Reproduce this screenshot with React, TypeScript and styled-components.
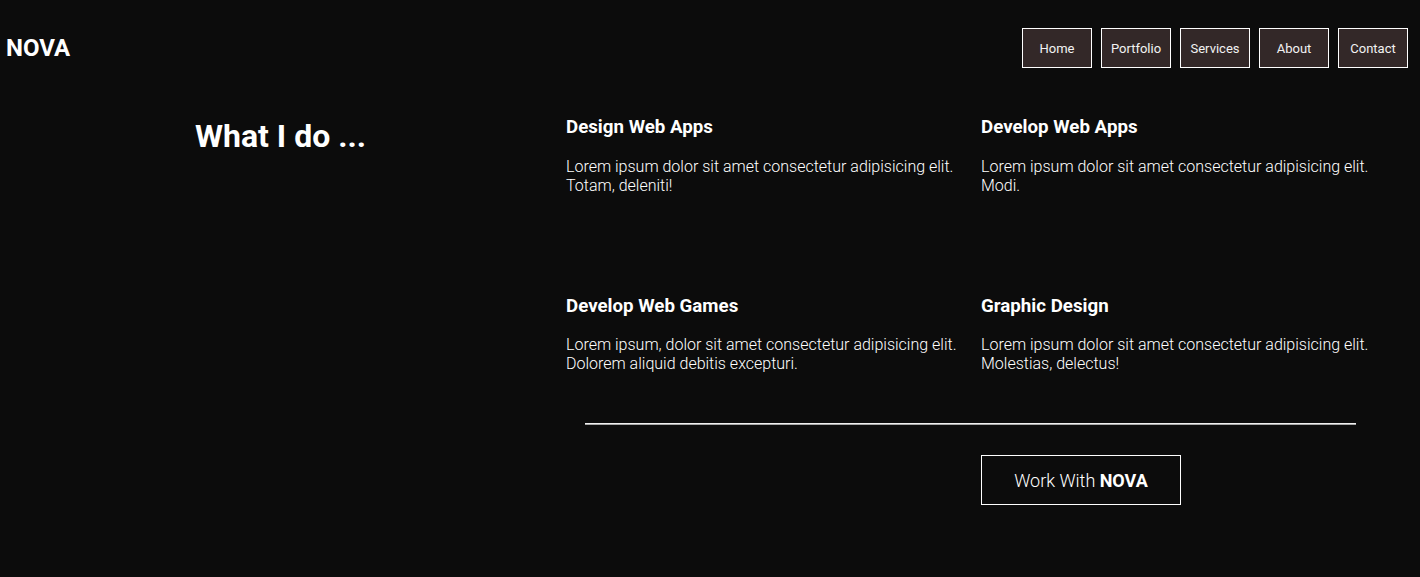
import React from "react";
import styled, { createGlobalStyle } from "styled-components";

const GlobalStyle = createGlobalStyle`
  html, body {
    margin: 0;
    padding: 0;
    background: #0c0c0c;
    color: #ffffff;
    font-family: Roboto, "Liberation Sans", Arial, sans-serif;
  }
  * { box-sizing: border-box; }
`;

const Page = styled.div`
  min-height: 577px;
  background: #0c0c0c;
`;

const Header = styled.header`
  display: flex;
  justify-content: space-between;
  align-items: center;
  padding: 28px 12px 0 6px;
`;

const Logo = styled.h2`
  margin: 0;
  font-size: 24px;
  font-weight: 700;
  color: #ffffff;
`;

const Nav = styled.nav`
  display: flex;
  gap: 9px;
`;

const NavButton = styled.button`
  width: 70px;
  height: 40px;
  background: #332828;
  border: 1px solid #ffffff;
  color: #f2f2f2;
  font-family: Roboto, "Liberation Sans", Arial, sans-serif;
  font-size: 13px;
  font-weight: 400;
  padding: 0;
  cursor: pointer;
`;

const Main = styled.main`
  display: grid;
  grid-template-columns: 566px 1fr;
  margin-top: 48px;
`;

const Intro = styled.div`
  padding: 1px 0 0 195px;
`;

const Title = styled.h1`
  margin: 0;
  font-size: 32px;
  font-weight: 700;
  color: #ffffff;
`;

const Content = styled.div`
  display: flex;
  flex-direction: column;
`;

const Services = styled.div`
  display: grid;
  grid-template-columns: 415px 415px;
  row-gap: 100px;
`;

const Card = styled.article`
  display: flex;
  flex-direction: column;
`;

const CardTitle = styled.h3`
  margin: 0 0 18.72px;
  font-size: 18.72px;
  font-weight: 700;
  color: #ffffff;
`;

const CardText = styled.p`
  margin: 0;
  font-size: 16px;
  font-weight: 300;
  color: #ffffff;
`;

const Divider = styled.hr`
  margin: 50px 0 0 19px;
  width: 771px;
  height: 2px;
  border: none;
  border-top: 1px solid #f0f0f0;
  border-bottom: 1px solid #a8a8a8;
`;

const Cta = styled.button`
  margin: 30px 0 0 415px;
  width: 200px;
  height: 50px;
  background: transparent;
  border: 1px solid #ffffff;
  color: #ffffff;
  font-family: Roboto, "Liberation Sans", Arial, sans-serif;
  font-size: 18px;
  font-weight: 300;
  cursor: pointer;

  strong {
    font-weight: 700;
  }
`;

const services = [
  {
    title: "Design Web Apps",
    text: "Lorem ipsum dolor sit amet consectetur adipisicing elit. Totam, deleniti!",
  },
  {
    title: "Develop Web Apps",
    text: "Lorem ipsum dolor sit amet consectetur adipisicing elit. Modi.",
  },
  {
    title: "Develop Web Games",
    text: "Lorem ipsum, dolor sit amet consectetur adipisicing elit. Dolorem aliquid debitis excepturi.",
  },
  {
    title: "Graphic Design",
    text: "Lorem ipsum dolor sit amet consectetur adipisicing elit. Molestias, delectus!",
  },
];

const navItems = ["Home", "Portfolio", "Services", "About", "Contact"];

export default function App() {
  return (
    <Page>
      <GlobalStyle />
      <Header>
        <Logo>NOVA</Logo>
        <Nav>
          {navItems.map((item) => (
            <NavButton key={item}>{item}</NavButton>
          ))}
        </Nav>
      </Header>
      <Main>
        <Intro>
          <Title>What I do ...</Title>
        </Intro>
        <Content>
          <Services>
            {services.map((s) => (
              <Card key={s.title}>
                <CardTitle>{s.title}</CardTitle>
                <CardText>{s.text}</CardText>
              </Card>
            ))}
          </Services>
          <Divider />
          <Cta>
            Work With <strong>NOVA</strong>
          </Cta>
        </Content>
      </Main>
    </Page>
  );
}
